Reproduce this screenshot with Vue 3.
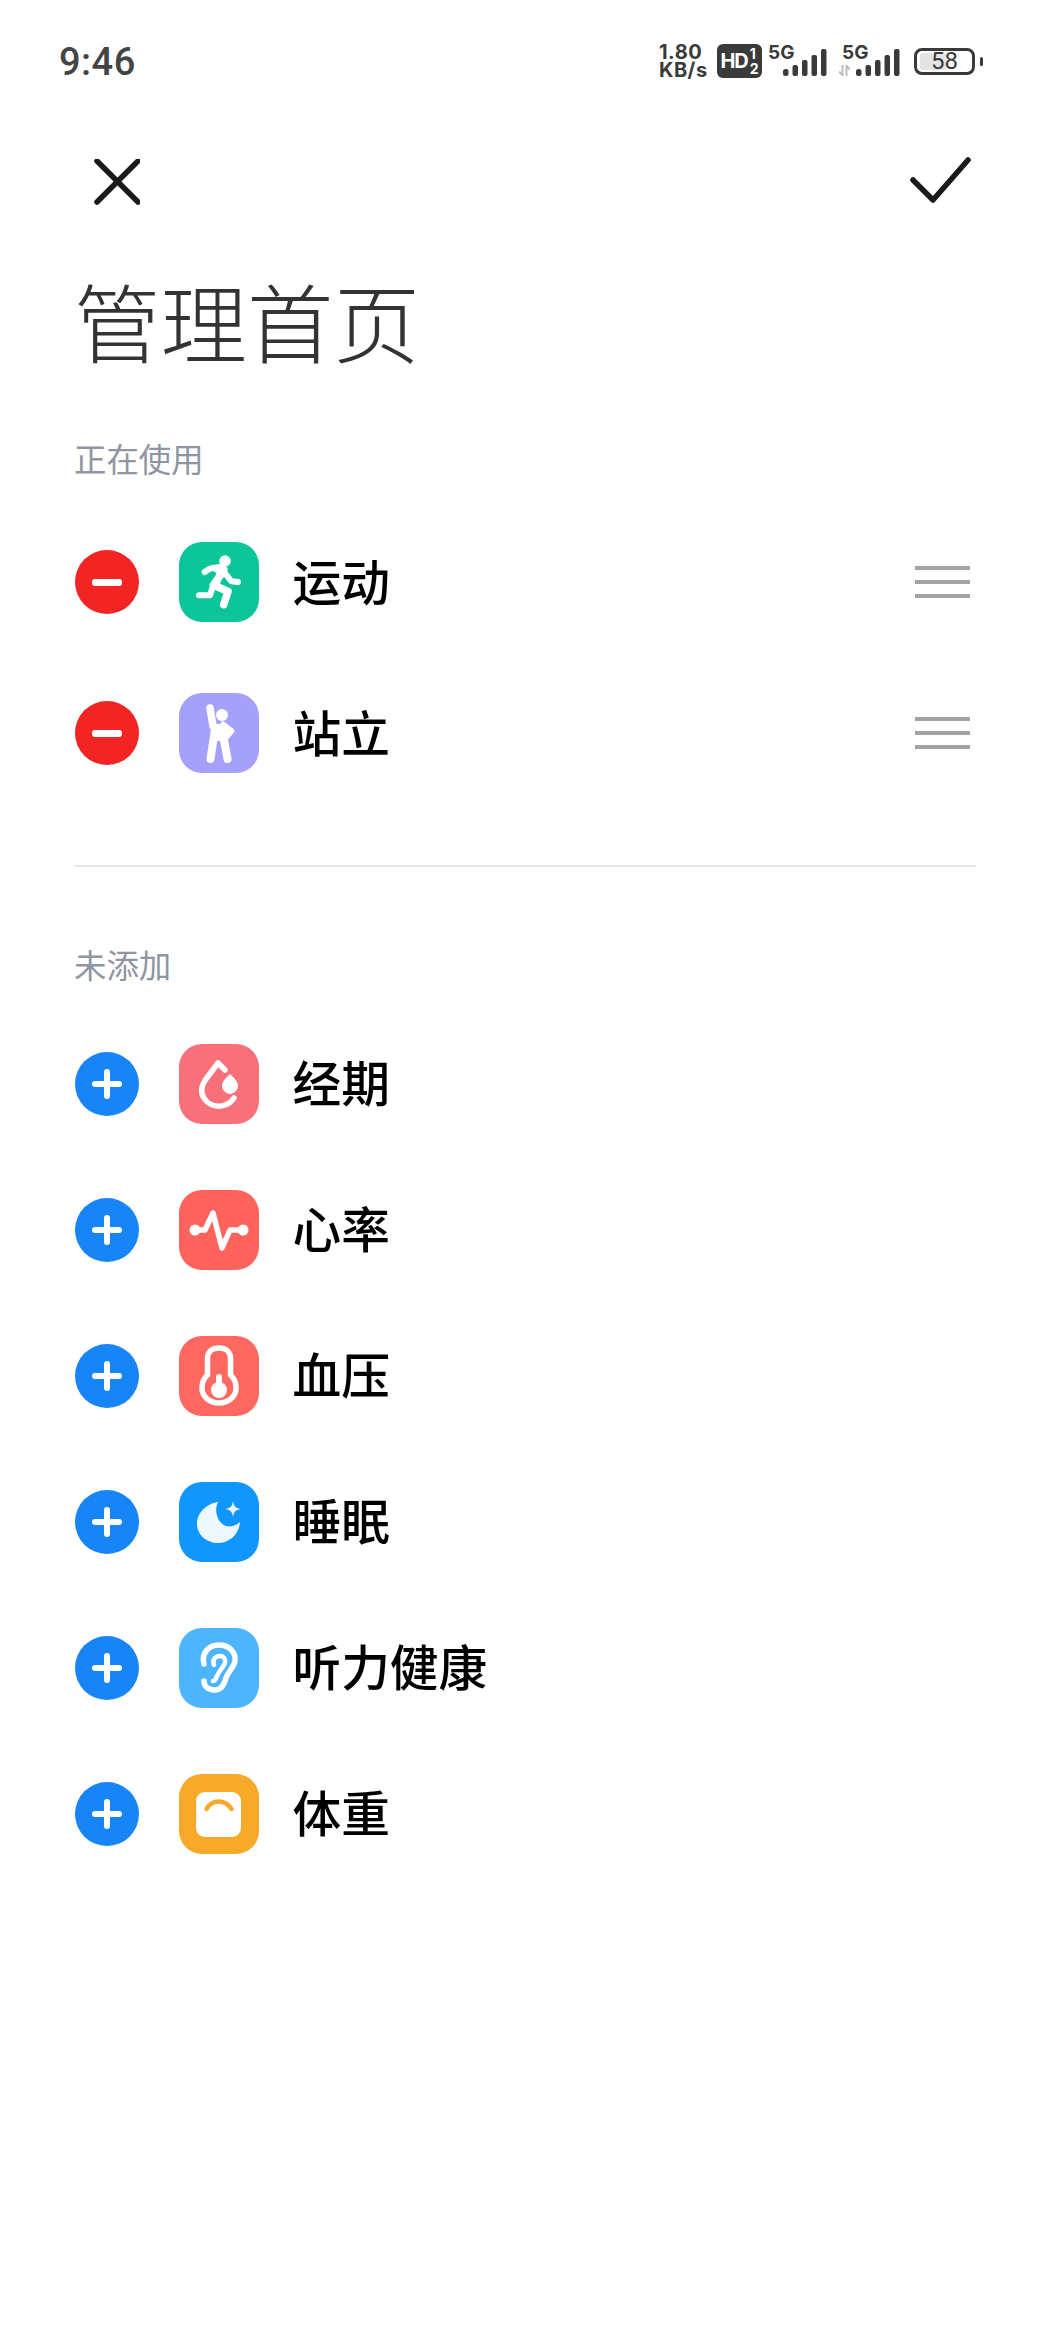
<script setup>
const active = [
  { name: '运动', icon: 'run', bg: '#0cc69a' },
  { name: '站立', icon: 'stand', bg: '#a5a1fa' }
]
const inactive = [
  { name: '经期', icon: 'drop', bg: '#f8717a' },
  { name: '心率', icon: 'pulse', bg: '#ff635c' },
  { name: '血压', icon: 'thermo', bg: '#ff6860' },
  { name: '睡眠', icon: 'moon', bg: '#1196fd' },
  { name: '听力健康', icon: 'ear', bg: '#4fb4fe' },
  { name: '体重', icon: 'scale', bg: '#f8a92a' }
]
</script>

<template>
  <div class="page">
    <header class="status">
      <span class="time">9:46</span>
      <div class="status-right">
        <span class="speed"><b>1.80</b><b>KB/s</b></span>
        <span class="hd"><i>HD</i><span class="hd-nums"><i>1</i><i>2</i></span></span>
        <span class="sig"><span class="five">5G</span>
          <svg width="44" height="28" viewBox="0 0 44 28"><g fill="#3a3a3a"><rect x="0" y="21" width="5.500" height="7" rx="2.500"/><rect x="9.500" y="17" width="5.500" height="11" rx="2"/><rect x="19" y="12" width="5.500" height="16" rx="2"/><rect x="28.500" y="7" width="5.500" height="21" rx="2"/><rect x="38" y="1" width="5.500" height="27" rx="2"/></g></svg>
        </span>
        <span class="sig sig2"><span class="five">5G</span>
          <svg class="arrows" width="11" height="11" viewBox="0 0 11 11"><path d="M3.500 0v10L0 6.500M7.500 11V1L11 4.500" fill="none" stroke="#bdbdbd" stroke-width="2"/></svg>
          <svg width="44" height="28" viewBox="0 0 44 28"><g fill="#3a3a3a"><rect x="0" y="21" width="5.500" height="7" rx="2.500"/><rect x="9.500" y="17" width="5.500" height="11" rx="2"/><rect x="19" y="12" width="5.500" height="16" rx="2"/><rect x="28.500" y="7" width="5.500" height="21" rx="2"/><rect x="38" y="1" width="5.500" height="27" rx="2"/></g></svg>
        </span>
        <span class="battery"><span class="batt-fill"></span><span class="batt-num">58</span></span>
        <span class="batt-tip"></span>
      </div>
    </header>

    <nav class="nav">
      <svg width="46" height="46" viewBox="0 0 46 46"><path d="M3 2L44 43M44 2L3 43" fill="none" stroke="#1a1a1a" stroke-width="5.500" stroke-linecap="round"/></svg>
      <svg width="64" height="50" viewBox="0 0 64 50"><path d="M5 23L25 43L60 3" fill="none" stroke="#1a1a1a" stroke-width="5.500" stroke-linecap="round" stroke-linejoin="round"/></svg>
    </nav>

    <h1 class="title">管理首页</h1>

    <h2 class="label label-first">正在使用</h2>
    <ul class="list list-first">
      <li v-for="item in active" :key="item.name" class="row row-active">
        <span class="toggle remove"><span class="bar"></span></span>
        <span class="app" :style="{ background: item.bg }">
          <svg v-if="item.icon === 'run'" width="80" height="80" viewBox="0 0 80 80">
            <circle cx="46" cy="19" r="5.800" fill="#fff"/>
            <path d="M25.700 30L31 26.500L41 25" fill="none" stroke="#fff" stroke-width="6" stroke-linecap="round" stroke-linejoin="round"/>
            <path d="M38 27L45 28L34.500 43L49 49.500L44.700 62.700" fill="none" stroke="#fff" stroke-width="7.500" stroke-linecap="round" stroke-linejoin="round"/>
            <path d="M38 27H46L41 42H35Z" fill="#fff"/>
            <path d="M47.300 32.700L52.300 39.300L59 40" fill="none" stroke="#fff" stroke-width="6" stroke-linecap="round" stroke-linejoin="round"/>
            <path d="M20 53.300H31L34 44" fill="none" stroke="#fff" stroke-width="6" stroke-linecap="round" stroke-linejoin="round"/>
          </svg>
          <svg v-else width="80" height="80" viewBox="0 0 80 80">
            <circle cx="43" cy="22" r="6" fill="#fff"/>
            <path d="M31 15L34 33" fill="none" stroke="#fff" stroke-width="7.500" stroke-linecap="round"/>
            <path d="M44 31L53 38L46 46" fill="none" stroke="#fff" stroke-width="5" stroke-linecap="round" stroke-linejoin="round"/>
            <path d="M36 36L31.500 66M45 36V47L48.500 66" fill="none" stroke="#fff" stroke-width="8" stroke-linecap="round" stroke-linejoin="round"/>
            <path d="M33 31H48V48H34Z" fill="#fff"/>
          </svg>
        </span>
        <span class="name">{{ item.name }}</span>
        <span class="handle"><i></i><i></i><i></i></span>
      </li>
    </ul>

    <div class="divider"></div>

    <h2 class="label">未添加</h2>
    <ul class="list list-second">
      <li v-for="item in inactive" :key="item.name" class="row">
        <span class="toggle add"><span class="bar"></span><span class="bar vert"></span></span>
        <span class="app" :style="{ background: item.bg }">
          <svg v-if="item.icon === 'drop'" width="80" height="80" viewBox="0 0 80 80">
            <path d="M46 26L39 19L27 35C22 42 21 48 25 54C29 61 38 64 46 61C50 60 53 57 55 54" fill="none" stroke="#fff" stroke-width="5.500" stroke-linecap="round" stroke-linejoin="round"/>
            <path d="M51 30C54 33 59 37 59 42C59 46 55 50 51 50C47 50 43 46 43 42C43 37 48 33 51 30Z" fill="#fff"/>
          </svg>
          <svg v-else-if="item.icon === 'pulse'" width="80" height="80" viewBox="0 0 80 80">
            <circle cx="16" cy="40" r="5.500" fill="#fff"/>
            <circle cx="64" cy="40" r="5.500" fill="#fff"/>
            <path d="M16 40H26L34 23L43 58L51 40L64 40" fill="none" stroke="#fff" stroke-width="5.500" stroke-linecap="round" stroke-linejoin="round"/>
          </svg>
          <svg v-else-if="item.icon === 'thermo'" width="80" height="80" viewBox="0 0 80 80">
            <path d="M28.500 39V22C28.500 16 33 12 40 12C47 12 51.500 16 51.500 22V39C55 42 57 47 57 52C57 61 49 67 40 67C31 67 23 61 23 52C23 47 25 42 28.500 39Z" fill="none" stroke="#fff" stroke-width="5.500"/>
            <rect x="37" y="38" width="6" height="14" rx="3" fill="#fff"/>
            <circle cx="40" cy="54" r="8" fill="#fff"/>
          </svg>
          <svg v-else-if="item.icon === 'moon'" width="80" height="80" viewBox="0 0 80 80">
            <path d="M39 20C30 21 18 29 18 42C18 53 28 61 39 61C50 61 60 53 61 40C57 44 50 46 45 43C38 39 35 28 39 20Z" fill="#eef8ff"/>
            <path d="M54 19C55 24 56 26 61.500 27C56 28 55 30 54 35C53 30 52 28 46.500 27C52 26 53 24 54 19Z" fill="#eef8ff"/>
          </svg>
          <svg v-else-if="item.icon === 'ear'" width="80" height="80" viewBox="0 0 80 80">
            <path d="M25 36C22 25 30 17 40 17C50 17 57 24 56 33C55 39 49 44 47 50C45 57 42 62 36 62C30 62 25 59 25 53" fill="none" stroke="#fff" stroke-width="5.500" stroke-linecap="round"/>
            <path d="M35 37C33 32 36 28 41 28C45 28 47 32 46 35C44 40 40 43 38 48C37 51 36 53 34 53" fill="none" stroke="#fff" stroke-width="4.500" stroke-linecap="round"/>
          </svg>
          <svg v-else width="80" height="80" viewBox="0 0 80 80">
            <rect x="17" y="18" width="45" height="45" rx="9" fill="#fff"/>
            <path d="M27.500 35C33 25 46 25 52.500 35" fill="none" stroke="#f8a92a" stroke-width="4.500" stroke-linecap="round"/>
          </svg>
        </span>
        <span class="name">{{ item.name }}</span>
      </li>
    </ul>
  </div>
</template>

<style>
html, body { margin: 0; background: #fff; }
</style>

<style scoped>
.page {
  width: 1049px;
  height: 2332px;
  box-sizing: border-box;
  overflow: hidden;
  background: #fff;
  font-family: "Noto Sans CJK SC", "Noto Sans", sans-serif;
  color: #000;
}
.status {
  height: 60px;
  padding: 31px 66px 0 59px;
  display: flex;
  align-items: center;
  justify-content: space-between;
}
.time {
  margin-top: 2px;
  font-family: "Roboto", sans-serif;
  font-size: 38px;
  font-weight: 500;
  letter-spacing: 0.5px;
  color: #444;
}
.status-right { display: flex; align-items: center; color: #3a3a3a; height: 40px; }
.speed {
  display: flex;
  flex-direction: column;
  font-family: "Inter", sans-serif;
  font-size: 20px;
  line-height: 18.300px;
  letter-spacing: 0.5px;
  align-items: flex-start;
  width: 49px;
}
.speed b { font-weight: 700; white-space: nowrap; }
.hd {
  margin-left: 9px;
  width: 45px;
  height: 34px;
  background: #3a3a3a;
  color: #fff;
  border-radius: 6px;
  display: flex;
  align-items: center;
  justify-content: center;
  font-family: "Inter", sans-serif;
  font-weight: 700;
  font-size: 20px;
  letter-spacing: -1px;
}
.hd i { font-style: normal; }
.hd-nums { display: flex; flex-direction: column; font-size: 14px; line-height: 15px; margin-left: 2px; letter-spacing: 0; }
.sig {
  margin-left: 6px;
  width: 59px;
  height: 34px;
  display: flex;
  align-items: flex-end;
  justify-content: flex-end;
  position: relative;
  padding-bottom: 2px;
  box-sizing: border-box;
}
.sig2 { margin-left: 12px; width: 61px; }
.sig2 .five { left: 3px; }
.five {
  position: absolute;
  left: 0;
  top: -1px;
  font-family: "Inter", sans-serif;
  font-weight: 700;
  font-size: 19px;
  line-height: 20px;
}
.arrows { position: absolute; left: 0; bottom: 2px; }
.sig svg { display: block; }
.battery {
  margin-left: 14px;
  width: 61px;
  height: 27px;
  box-sizing: border-box;
  border: 3px solid #3a3a3a;
  border-radius: 8px;
  position: relative;
  display: flex;
  align-items: center;
  justify-content: center;
}
.batt-fill { position: absolute; left: 3px; top: 2px; bottom: 2px; width: 26px; background: #e4e4e4; border-radius: 2px; }
.batt-num { position: relative; font-family: "Roboto", sans-serif; font-size: 24px; line-height: 21px; color: #3a3a3a; }
.batt-tip { width: 3px; height: 9px; background: #3a3a3a; border-radius: 2px; margin-left: 5px; }

.nav {
  height: 50px;
  margin-top: 66px;
  padding: 0 77px 0 94px;
  display: flex;
  justify-content: space-between;
  align-items: center;
}
.title {
  margin: 53px 0 0 74px;
  font-size: 86.500px;
  font-weight: 300;
  line-height: 120px;
  color: #333;
}
.label {
  margin: 0 0 0 74px;
  font-size: 32.400px;
  font-weight: 400;
  line-height: 46px;
  color: #8f95a3;
}
.label-first { margin-top: 55px; }
.list { list-style: none; margin: 0; padding: 0; }
.list-first { margin-top: 25.500px; }
.list-second { margin-top: 24px; }
.row {
  height: 146px;
  display: flex;
  align-items: center;
  padding-left: 75px;
}
.row-active { height: 151px; }
.toggle {
  width: 64px;
  height: 64px;
  border-radius: 50%;
  position: relative;
  flex: none;
}
.remove { background: #f22424; }
.add { background: #1785f5; }
.bar {
  position: absolute;
  left: 17px;
  top: 29px;
  width: 30px;
  height: 6px;
  border-radius: 3px;
  background: #fff;
}
.remove .bar { top: 28.500px; height: 7px; }
.bar.vert { left: 29px; top: 17px; width: 6px; height: 30px; }
.app {
  margin-left: 40px;
  width: 80px;
  height: 80px;
  border-radius: 23px;
  flex: none;
}
.app svg { display: block; }
.name {
  margin-left: 33.500px;
  margin-bottom: 5px;
  font-size: 48.700px;
  font-weight: 500;
  line-height: 60px;
  color: #000;
}
.handle {
  margin-left: auto;
  margin-right: 79px;
  width: 55px;
  display: flex;
  flex-direction: column;
  gap: 10px;
}
.handle i { display: block; height: 4px; background: #a3a3a3; }
.divider {
  height: 2px;
  margin: 56px 73px 74px 74px;
  background: #e6e6e6;
}
</style>
